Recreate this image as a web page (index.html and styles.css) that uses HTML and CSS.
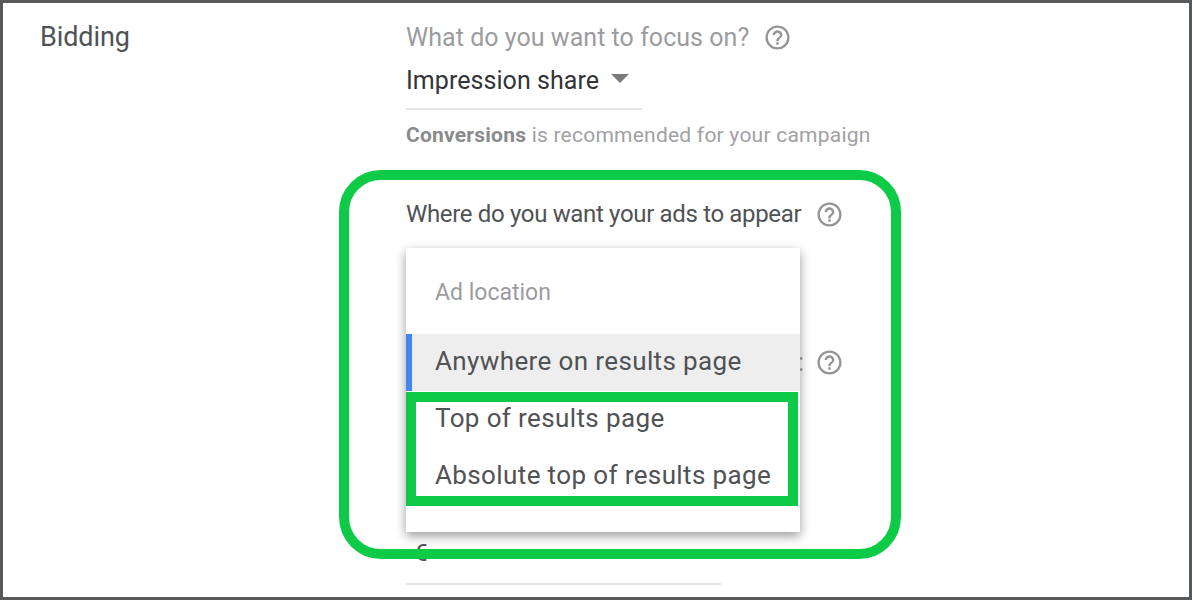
FILE: index.html
```html
<!DOCTYPE html>
<html lang="en">
<head>
  <meta charset="UTF-8">
  <title>Bidding</title>
  <link rel="stylesheet" href="styles.css">
</head>
<body>
  <svg class="defs" width="0" height="0">
    <symbol id="help" viewBox="0 0 24 24">
      <path d="M11 18h2v-2h-2v2zm1-16C6.48 2 2 6.48 2 12s4.48 10 10 10 10-4.48 10-10S17.52 2 12 2zm0 18c-4.41 0-8-3.59-8-8s3.59-8 8-8 8 3.59 8 8-3.59 8-8 8zm0-14c-2.21 0-4 1.79-4 4h2c0-1.1.9-2 2-2s2 .9 2 2c0 2-3 1.75-3 5h2c0-2.25 3-2.5 3-5 0-2.21-1.79-4-4-4z"/>
    </symbol>
  </svg>

  <div class="frame">
    <div class="section-title">Bidding</div>

    <div class="fields">
      <div class="label-row focus-row">
        <span class="label muted">What do you want to focus on?</span>
        <svg class="help"><use href="#help"/></svg>
      </div>
      <div class="select">
        <span>Impression share</span>
        <span class="arrow"></span>
      </div>
      <p class="hint"><strong>Conversions</strong> is recommended for your campaign</p>

      <div class="label-row where-row">
        <span class="label">Where do you want your ads to appear</span>
        <svg class="help"><use href="#help"/></svg>
      </div>

      <div class="label-row share-row">
        <span class="label">:</span>
        <svg class="help"><use href="#help"/></svg>
      </div>

      <div class="money">€</div>

      <div class="menu">
        <div class="menu-title">Ad location</div>
        <div class="menu-item selected">Anywhere on results page</div>
        <div class="menu-item">Top of results page</div>
        <div class="menu-item">Absolute top of results page</div>
      </div>
    </div>

    <div class="mark mark-outer"></div>
    <div class="mark mark-inner"></div>
  </div>
</body>
</html>
```

FILE: styles.css
```css
* {
  box-sizing: border-box;
}

html, body {
  margin: 0;
  height: 100%;
}

body {
  font-family: Roboto, "Liberation Sans", sans-serif;
  background-color: #ffffff;
  color: #505255;
}

.defs {
  display: block;
  height: 0;
}

.frame {
  position: relative;
  display: flex;
  height: 600px;
  padding-left: 37px;
  border: 3px solid #58595b;
  overflow: hidden;
}

.section-title {
  width: 366px;
  flex: none;
  margin-top: 18px;
  font-size: 27px;
  letter-spacing: -0.1px;
  line-height: 32px;
}

.fields {
  position: relative;
  flex: 1;
}

.label-row {
  display: flex;
  align-items: center;
  height: 34px;
  font-size: 25px;
  letter-spacing: 0.04px;
}

.label {
  white-space: nowrap;
}

.muted {
  color: #9b9c9e;
}

.help {
  flex: none;
  width: 29px;
  height: 29px;
  fill: #949597;
}

.focus-row {
  margin-top: 17px;
}

.focus-row .help {
  margin-left: 14px;
}

.select {
  display: flex;
  align-items: center;
  width: 236px;
  height: 54px;
  margin-top: 2px;
  padding-bottom: 4px;
  border-bottom: 2px solid #e6e6e6;
  color: #333538;
  font-size: 25px;
  letter-spacing: 0.06px;
}

.arrow {
  width: 0;
  height: 0;
  margin: -4px 0 0 12px;
  border-left: 9px solid transparent;
  border-right: 9px solid transparent;
  border-top: 9px solid #7b7c7e;
}

.hint {
  margin: 12px 0 0;
  color: #a0a1a3;
  font-size: 21px;
  letter-spacing: 0.23px;
  line-height: 26px;
}

.hint strong {
  color: #8a8b8d;
  font-weight: 700;
}

.where-row {
  margin-top: 49px;
  font-size: 24px;
  letter-spacing: -0.34px;
}

.where-row .label {
  width: 396px;
}

.where-row .help {
  margin-left: 13px;
}

.share-row {
  margin-top: 114px;
}

.share-row .label {
  width: 398px;
  color: #a0a1a3;
  text-align: right;
}

.share-row .help {
  margin-left: 11px;
}

.money {
  width: 315px;
  height: 49px;
  margin-top: 157px;
  padding-left: 8px;
  border-bottom: 2px solid #e6e6e6;
  color: #505255;
  font-size: 24px;
  line-height: 34px;
}

.menu {
  position: absolute;
  top: 245px;
  left: 0;
  width: 394px;
  height: 284px;
  background-color: #ffffff;
  box-shadow: 0 4px 10px rgba(0,0,0,0.4);
  font-size: 26px;
  letter-spacing: 0.38px;
}

.menu-title {
  height: 86px;
  padding: 29px 0 0 29px;
  color: #9b9c9e;
  font-size: 23px;
  letter-spacing: 0;
  line-height: 32px;
}

.menu-item {
  height: 57px;
  padding-left: 29px;
  line-height: 54px;
  white-space: nowrap;
}

.selected {
  padding-left: 23px;
  border-left: 6px solid #4285f4;
  background-color: #eeeeee;
}

/* green annotation boxes drawn over the screenshot */
.mark {
  position: absolute;
  border: 10px solid #0ecb47;
  pointer-events: none;
}

.mark-outer {
  top: 167px;
  left: 336px;
  width: 562px;
  height: 389px;
  border-radius: 42px;
}

.mark-inner {
  top: 389px;
  left: 403px;
  width: 392px;
  height: 114px;
}
```
